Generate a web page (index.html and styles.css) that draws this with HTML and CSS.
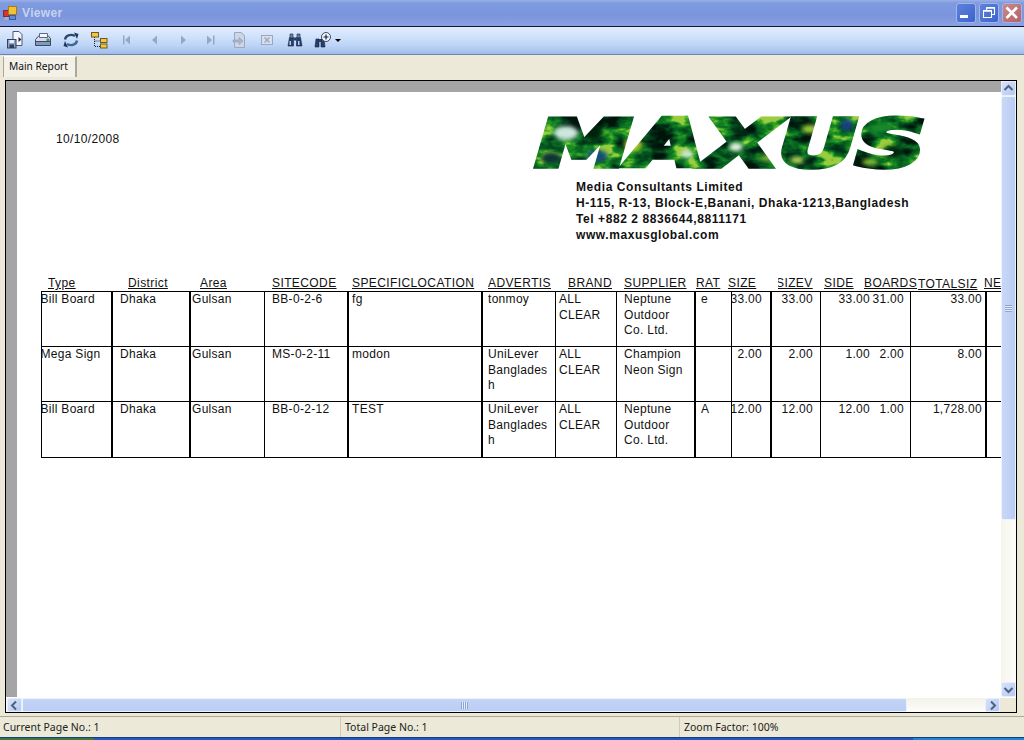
FILE: index.html
```html
<!DOCTYPE html>
<html lang="en">
<head>
<meta charset="utf-8">
<title>Viewer</title>
<link rel="stylesheet" href="styles.css">
</head>
<body>
<div class="window">
  <header class="titlebar">
    <svg class="app-icon" width="15" height="15" viewBox="0 0 15 15"><rect x=".5" y="4.500" width="5" height="6" fill="#d8342c" stroke="#7a2a50"/><rect x="5.500" y=".5" width="8" height="8" fill="#f2c230" stroke="#a87a20"/><rect x="6.500" y="9.500" width="6" height="4" fill="#5c8ad8" stroke="#3a5aa8"/><rect x="1.500" y="11" width="4" height="3" fill="#9fb0d8"/></svg>
    <span class="title">Viewer</span>
    <div class="winbtns">
      <span class="winbtn"><svg width="20" height="20" viewBox="0 0 20 20"><rect x="4" y="12" width="8" height="3" fill="#fff"/></svg></span>
      <span class="winbtn"><svg width="20" height="20" viewBox="0 0 20 20"><path d="M7.500 4.500h8v7h-3M7.500 4.500v3M4.500 7.500h8v7h-8z" fill="none" stroke="#fff" stroke-width="1.100"/><path d="M7.500 5h8M4.500 8h8" stroke="#fff" stroke-width="1.600"/></svg></span>
      <span class="winbtn close"><svg width="20" height="20" viewBox="0 0 20 20"><path d="M4.500 4.500l10.500 10.500M15 4.500L4.500 15" stroke="#fff" stroke-width="2.600"/></svg></span>
    </div>
  </header>

  <nav class="toolbar">
    <svg class="tool" width="18" height="18" viewBox="0 0 18 18"><path d="M7 .5h6l3 3v11H7z" fill="#f4f6fb" stroke="#4a5a78"/><rect x="1.500" y="8.500" width="8.500" height="8.500" fill="#8fa3c4" stroke="#33415c"/><rect x="3.500" y="9" width="4.500" height="3" fill="#e8eef8"/><rect x="3.500" y="13.500" width="4.500" height="3.500" fill="#2f3e5c"/><path d="M12.500 6l3 2.500-3 2.500z" fill="#1d2a44"/></svg>
    <svg class="tool" width="18" height="18" viewBox="0 0 18 18"><path d="M5 4.500h9l2.500 3v6.500H1.500V8.500z" fill="#d4dced" stroke="#3c4a68"/><path d="M5.500 2.500h8v4h-8z" fill="#f6f8fc" stroke="#5a6a88"/><path d="M1.500 10.500h15v4h-15z" fill="#8298bc" stroke="#3c4a68"/><rect x="12.500" y="7.500" width="3" height="2.500" fill="#3aa04a"/></svg>
    <svg class="tool" width="18" height="18" viewBox="0 0 18 18"><path d="M3 8.500C3.500 4.500 8.500 2.500 13 5" fill="none" stroke="#2c4a78" stroke-width="2.400"/><path d="M15 9.500C14.500 13.500 9.500 15.500 5 13" fill="none" stroke="#3a6898" stroke-width="2.400"/><path d="M12 1.500l4.500 1.500-1.500 5z" fill="#1e3862"/><path d="M6 16.500L1.500 15 3 10z" fill="#1e3862"/></svg>
    <svg class="tool" width="18" height="18" viewBox="0 0 18 18"><path d="M4.500 6v9.500h6M4.500 10h6" fill="none" stroke="#222" stroke-dasharray="1 1"/><rect x="1.500" y="1.500" width="7" height="4.500" fill="#f3c640" stroke="#6c5a20"/><rect x="10.500" y="7.500" width="6.500" height="4" fill="#f3c640" stroke="#6c5a20"/><rect x="10.500" y="13" width="6.500" height="4" fill="#f3c640" stroke="#6c5a20"/></svg>
    <svg class="tool" width="18" height="18" viewBox="0 0 18 18"><path d="M5 4.500h1.500v9H5zM12 4.500v9L7 9z" fill="#98a7c0"/></svg>
    <svg class="tool" width="18" height="18" viewBox="0 0 18 18"><path d="M11 4.500v9L6 9z" fill="#98a7c0"/></svg>
    <svg class="tool" width="18" height="18" viewBox="0 0 18 18"><path d="M7 4.500v9L12 9z" fill="#98a7c0"/></svg>
    <svg class="tool" width="18" height="18" viewBox="0 0 18 18"><path d="M5 4.500v9L10 9zM11 4.500h1.500v9H11z" fill="#98a7c0"/></svg>
    <svg class="tool" width="18" height="18" viewBox="0 0 18 18"><path d="M4.500 1.500H11l3.500 3v12h-10z" fill="#cdd6e6" stroke="#9aa7bd"/><path d="M3 9h6V6.500l4 3.500-4 3.500V11H3z" fill="#aab6cb" stroke="#8e9db8" stroke-width=".6"/></svg>
    <svg class="tool" width="18" height="18" viewBox="0 0 18 18"><rect x="3.500" y="4.500" width="11" height="9" fill="#d8e0ee" stroke="#9aa7bd"/><path d="M6.500 6.500l5 5M11.500 6.500l-5 5" stroke="#9aa7bd" stroke-width="1.400"/></svg>
    <svg class="tool" width="18" height="18" viewBox="0 0 18 18"><path d="M3.500 6.500L2 15h5.500V6.500zM10.500 6.500V15H16l-1.500-8.500z" fill="#26406c" stroke="#15233f" stroke-width=".6"/><path d="M4 3h3v4H4zM11 3h3v4h-3z" fill="#6a84ac" stroke="#15233f" stroke-width=".6"/><rect x="7.500" y="6.500" width="3" height="3" fill="#26406c"/><rect x="3.500" y="10" width="1.500" height="4" fill="#b9cbe6"/><rect x="12" y="10" width="1.500" height="4" fill="#b9cbe6"/></svg>
    <svg class="tool" width="18" height="18" viewBox="0 0 18 18"><path d="M2 8L1 16h4V8zM7 8v8h4l-1-8z" fill="#26406c" stroke="#15233f" stroke-width=".6"/><rect x="5" y="8" width="2" height="3" fill="#26406c"/><circle cx="12" cy="6" r="4.500" fill="#f4f6fb" stroke="#3c4a68"/><path d="M12 3.500v5M9.500 6h5" stroke="#15233f" stroke-width="1.200"/></svg>
    <span class="caret"></span>
  </nav>

  <div class="tabstrip"><span class="tab">Main Report</span></div>

  <section class="viewer">
    <div class="viewer-top">
      <div class="canvas">
        <article class="page">
          <div class="head">
            <span class="date">10/10/2008</span>
            <div class="brand">
              <svg class="logo" width="394" height="56" viewBox="0 0 394 56">
                <defs>
                  <filter id="noise" x="0" y="0" width="100%" height="100%" color-interpolation-filters="sRGB">
                    <feTurbulence type="fractalNoise" baseFrequency="0.035 0.06" numOctaves="4" seed="23"/>
                    <feColorMatrix type="matrix" values="2.400 0 0 0 -.7  2.400 0 0 0 -.7  2.400 0 0 0 -.7  0 0 0 0 1"/>
                    <feComponentTransfer>
                      <feFuncR type="table" tableValues="0 0 .01 .02 .04 .08 .25 .6"/>
                      <feFuncG type="table" tableValues=".08 .14 .22 .32 .42 .52 .66 .8"/>
                      <feFuncB type="table" tableValues=".04 .07 .1 .12 .13 .14 .15 .25"/>
                    </feComponentTransfer>
                  </filter>
                  <filter id="soft" x="-50%" y="-50%" width="200%" height="200%"><feGaussianBlur stdDeviation="2"/></filter>
                  <pattern id="foliage" patternUnits="userSpaceOnUse" width="394" height="60">
                    <rect width="394" height="60" filter="url(#noise)"/>
                    <g filter="url(#soft)">
                      <ellipse cx="35" cy="21" rx="12" ry="7" fill="#cfe6de"/>
                      <ellipse cx="62" cy="20" rx="9" ry="8" fill="#04200e"/>
                      <ellipse cx="102" cy="33" rx="9" ry="6" fill="#b8c828"/>
                      <ellipse cx="66" cy="44" rx="11" ry="6" fill="#164e78"/>
                      <ellipse cx="20" cy="46" rx="10" ry="6" fill="#0a3434"/>
                      <ellipse cx="156" cy="42" rx="6" ry="4" fill="#cfe6da"/>
                      <ellipse cx="205" cy="35" rx="7" ry="4" fill="#e8f2e8"/>
                      <ellipse cx="240" cy="46" rx="12" ry="3" fill="#8cc038"/>
                      <ellipse cx="316" cy="13" rx="6" ry="6" fill="#163e82"/>
                      <ellipse cx="279" cy="17" rx="8" ry="4" fill="#a0cc38"/>
                      <ellipse cx="266" cy="48" rx="7" ry="3" fill="#c8e060"/>
                      <ellipse cx="339" cy="50" rx="8" ry="3" fill="#90c838"/>
                      <ellipse cx="362" cy="40" rx="10" ry="6" fill="#06260e"/>
                      <ellipse cx="350" cy="16" rx="12" ry="5" fill="#168a2c"/>
                    </g>
                  </pattern>
                </defs>
                <text class="logotext" x="5" y="53.500" textLength="389" lengthAdjust="spacingAndGlyphs" fill="url(#foliage)" stroke="url(#foliage)">MAXUS</text>
              </svg>
              <address class="company">
                <span>Media Consultants Limited</span>
                <span>H-115, R-13, Block-E,Banani, Dhaka-1213,Bangladesh</span>
                <span>Tel +882 2 8836644,8811171</span>
                <span>www.maxusglobal.com</span>
              </address>
            </div>
          </div>

          <div class="hdrs">
            <span class="h h-type"><u>Type</u></span>
            <span class="h h-district"><u>District</u></span>
            <span class="h h-area"><u>Area</u></span>
            <span class="h h-code"><u>SITECODE</u></span>
            <span class="h h-loc"><u>SPECIFICLOCATION</u></span>
            <span class="h h-adv"><u>ADVERTIS</u></span>
            <span class="h h-brand"><u>BRAND</u></span>
            <span class="h h-sup"><u>SUPPLIER</u></span>
            <span class="h h-rat"><u>RAT</u></span>
            <span class="h h-size"><u>SIZE</u></span>
            <span class="h h-sizev"><u>SIZEV</u></span>
            <span class="h h-side"><u>SIDE</u></span>
            <span class="h h-boards"><u>BOARDS</u></span>
            <span class="h h-total"><u>TOTALSIZ</u></span>
            <span class="h h-ne"><u>NE</u></span>
          </div>

          <div class="rows">
            <div class="row r1">
              <div class="c c1">Bill Board</div><div class="c c2">Dhaka</div><div class="c c3">Gulsan</div><div class="c c4">BB-0-2-6</div><div class="c c5">fg</div><div class="c c6">tonmoy</div><div class="c c7">ALL<br>CLEAR</div><div class="c c8">Neptune<br>Outdoor<br>Co. Ltd.</div><div class="c c9">e</div><div class="c c10 num">33.00</div><div class="c c11 num">33.00</div><div class="c c12 num">33.00</div><div class="c c13 num">31.00</div><div class="c c14 num">33.00</div><div class="c c15"></div>
            </div>
            <div class="row r2">
              <div class="c c1">Mega Sign</div><div class="c c2">Dhaka</div><div class="c c3">Gulsan</div><div class="c c4">MS-0-2-11</div><div class="c c5">modon</div><div class="c c6">UniLever<br>Banglades<br>h</div><div class="c c7">ALL<br>CLEAR</div><div class="c c8">Champion<br>Neon Sign</div><div class="c c9"></div><div class="c c10 num">2.00</div><div class="c c11 num">2.00</div><div class="c c12 num">1.00</div><div class="c c13 num">2.00</div><div class="c c14 num">8.00</div><div class="c c15"></div>
            </div>
            <div class="row r3">
              <div class="c c1">Bill Board</div><div class="c c2">Dhaka</div><div class="c c3">Gulsan</div><div class="c c4">BB-0-2-12</div><div class="c c5">TEST</div><div class="c c6">UniLever<br>Banglades<br>h</div><div class="c c7">ALL<br>CLEAR</div><div class="c c8">Neptune<br>Outdoor<br>Co. Ltd.</div><div class="c c9">A</div><div class="c c10 num">12.00</div><div class="c c11 num">12.00</div><div class="c c12 num">12.00</div><div class="c c13 num">1.00</div><div class="c c14 num">1,728.00</div><div class="c c15"></div>
            </div>
          </div>
        </article>
      </div>
      <aside class="vscroll">
        <span class="sbtn"><svg width="15" height="15" viewBox="0 0 15 15"><path d="M3.500 9L7.500 5l4 4" fill="none" stroke="#4d6185" stroke-width="2"/></svg></span>
        <div class="vthumb"><span class="grip-v"></span></div>
        <div class="vtrack"></div>
        <span class="sbtn"><svg width="15" height="15" viewBox="0 0 15 15"><path d="M3.500 6l4 4 4-4" fill="none" stroke="#4d6185" stroke-width="2"/></svg></span>
      </aside>
    </div>
    <div class="hscroll">
      <span class="sbtn"><svg width="15" height="15" viewBox="0 0 15 15"><path d="M9 3.500l-4 4 4 4" fill="none" stroke="#4d6185" stroke-width="2"/></svg></span>
      <div class="hthumb"><span class="grip-h"></span></div>
      <div class="htrack"></div>
      <span class="sbtn"><svg width="15" height="15" viewBox="0 0 15 15"><path d="M6 3.500l4 4-4 4" fill="none" stroke="#4d6185" stroke-width="2"/></svg></span>
      <span class="corner"></span>
    </div>
  </section>

  <footer class="status">
    <span class="stat s1">Current Page No.: 1</span>
    <span class="stat s2">Total Page No.: 1</span>
    <span class="stat s3">Zoom Factor: 100%</span>
  </footer>
  <div class="taskbar"><span class="tb-start"></span><span class="tb-mid"></span><span class="tb-end"></span></div>
</div>
</body>
</html>
```
FILE: styles.css
```css
* { box-sizing: border-box; }
html, body { margin: 0; padding: 0; }
body { width: 1024px; height: 740px; overflow: hidden; background: #ece9d8; font-family: "Liberation Sans", Arial, sans-serif; }
.window { width: 1024px; height: 740px; display: flex; flex-direction: column; background: #ece9d8; }

.titlebar { height: 27px; flex: none; display: flex; align-items: center; padding: 0 2px 0 3px; gap: 4px; border-bottom: 1px solid #101830;
  background: linear-gradient(#9cb0e6 0, #7f9be0 3px, #7b95dc 60%, #8aa2e2 100%); }
.app-icon { flex: none; }
.title { font: bold 12px "Liberation Sans", sans-serif; color: #c6d3f0; letter-spacing: .35px; }
.winbtns { margin-left: auto; display: flex; gap: 3px; }
.winbtn { width: 20px; height: 20px; border-radius: 3px; background: linear-gradient(135deg, #5f82dc, #3a63cc); border: 1px solid #9fb4e8; display: block; }
.winbtn svg { display: block; margin: -1px; }
.winbtn.close { background: linear-gradient(135deg, #c98a8c, #b66066); }

.toolbar { height: 28px; flex: none; display: flex; align-items: center; gap: 10px; padding: 0 0 1px 6px; border-bottom: 1px solid #6f83ae;
  background: linear-gradient(#e0ecfd 0, #d0e2fb 35%, #bcd3f6 70%, #9ebbea 100%); }
.tool { flex: none; display: block; }
.caret { width: 0; height: 0; margin-left: -7px; border: 3px solid transparent; border-top: 3px solid #000; border-bottom: 0; }

.tabstrip { height: 25px; flex: none; padding: 1px 0 0 3px; background: #ece9d8; }
.tab { display: block; width: 74px; height: 21px; padding-left: 5px; font: 10.200px/19px "Noto Sans", sans-serif; color: #111; background: #f4f2e8; border-left: 1px solid #a9a79a; border-top: 1px solid #fff; border-right: 2px solid #aca899; white-space: nowrap; }

.viewer { margin: 0 7px 0 5px; height: 633px; flex: none; border: 1px solid #000; display: flex; flex-direction: column; background: #a5a5a5; }
.viewer-top { flex: 1; min-height: 0; display: flex; }
.canvas { flex: 1; min-width: 0; padding: 11px 0 0 11px; overflow: hidden; }
.page { width: 985px; height: 605px; background: #fff; overflow: hidden; }

.head { position: relative; height: 184px; }
.date { position: absolute; left: 39px; top: 40px; font-size: 12px; line-height: 14px; letter-spacing: .35px; color: #111; }
.brand { position: absolute; left: 514px; top: 20px; }
.logo { display: block; overflow: visible; }
.logotext { font: italic bold 64px "DejaVu Sans", sans-serif; stroke-width: 5.500px; }
.company { margin: 11px 0 0 45px; display: flex; flex-direction: column; font: bold 12px/16px "Liberation Sans", sans-serif; letter-spacing: .58px; color: #111; white-space: nowrap; }

.hdrs { display: flex; height: 15px; font-size: 12px; line-height: 14px; letter-spacing: .4px; color: #111; white-space: nowrap; }
.h { flex: none; display: block; overflow: hidden; height: 15px; }
.h-type { width: 111px; padding-left: 31px; }
.h-district { width: 72px; }
.h-area { width: 72px; }
.h-code { width: 80px; }
.h-loc { width: 136px; }
.h-adv { width: 80px; }
.h-brand { width: 56px; }
.h-sup { width: 72px; }
.h-rat { width: 32px; }
.h-size { width: 50px; }
.h-sizev { width: 46px; text-indent: -2px; }
.h-side { width: 40px; }
.h-boards { width: 54px; }
.h-total { width: 66px; padding-top: 1px; }
.h-ne { width: 17px; }

.rows { margin-left: 24px; border-top: 1px solid #000; }
.row { display: grid; grid-template-columns: 70px 78px 75px 83px 134px 74px 61px 78px 37px 39px 50px 50px 40px 75px 17px; border-bottom: 1px solid #000; }
.r1 { height: 55px; }
.r2 { height: 55px; }
.r3 { height: 56px; }
.c { font-size: 12px; line-height: 15.500px; letter-spacing: .3px; color: #111; overflow: hidden; border-left: 1px solid #000; }
.c1 { text-indent: -1.500px; white-space: nowrap; }
.c2 { border-left-width: 2px; padding-left: 7px; }
.c3 { border-left-width: 2px; padding-left: 1px; }
.c4 { padding-left: 7px; }
.c5 { border-left-width: 2px; padding-left: 3px; }
.c6 { border-left-width: 2px; padding-left: 5px; }
.c7 { padding-left: 3px; }
.c8 { padding-left: 7px; }
.c9 { border-left-width: 2px; padding-left: 5px; }
.c15 { border-left-width: 2px; }
.num { text-align: right; white-space: nowrap; direction: rtl; }
.c10 { padding-right: 8px; }
.c11 { border-left-width: 2px; padding-right: 7px; }
.c13 { border-left-width: 0; padding-right: 6px; }
.c14 { padding-right: 3px; }

.vscroll { width: 15px; flex: none; display: flex; flex-direction: column; background: #fbfbf8; }
.sbtn { width: 15px; height: 15px; flex: none; display: block; background: linear-gradient(135deg, #d6e2fb, #b6c9f0); border: 1px solid #e8eefb; border-radius: 2px; }
.sbtn svg { display: block; margin: -1px; }
.vthumb { height: 424px; flex: none; display: flex; align-items: center; justify-content: center; background: linear-gradient(90deg, #c9d8f8, #b9ccf4); border: 1px solid #eef2fb; border-radius: 2px; }
.grip-v { width: 7px; height: 7px; background: repeating-linear-gradient(#8ea4cf 0 1px, #e6edfb 1px 2px); }
.vtrack { flex: 1; background: linear-gradient(90deg, #f5f4ec, #fdfdfb); }

.hscroll { height: 15px; flex: none; display: flex; background: #f8f7f0; border-top: 1px solid #fff; padding-left: 1px; }
.hscroll .sbtn { height: 14px; }
.hthumb { width: 885px; flex: none; display: flex; align-items: center; justify-content: center; background: linear-gradient(#c3d4f7, #bacdf5); border: 1px solid #eef2fb; border-radius: 2px; }
.grip-h { width: 7px; height: 7px; background: repeating-linear-gradient(90deg, #8ea4cf 0 1px, #e6edfb 1px 2px); }
.htrack { flex: 1; background: linear-gradient(#f3f2ea, #fdfdfb); }
.corner { width: 16px; flex: none; background: #ece9d8; }

.status { height: 21px; flex: none; margin-top: 3px; display: flex; align-items: center; border-top: 1px solid #aca899; font: 10.500px "Noto Sans", sans-serif; color: #222; background: #ece9d8; }
.stat { height: 20px; line-height: 21px; display: block; white-space: nowrap; }
.s1 { width: 340px; padding-left: 3px; }
.s2 { width: 339px; padding-left: 4px; border-left: 1px solid #cfccbb; }
.s3 { padding-left: 4px; border-left: 1px solid #cfccbb; }

.taskbar { flex: 1; display: flex; border-top: 1px solid #1a3a7a; }
.tb-start { width: 94px; background: #3a7a3a; }
.tb-mid { flex: 1; background: #2456c4; }
.tb-end { width: 111px; background: #1a8ad8; }
```
